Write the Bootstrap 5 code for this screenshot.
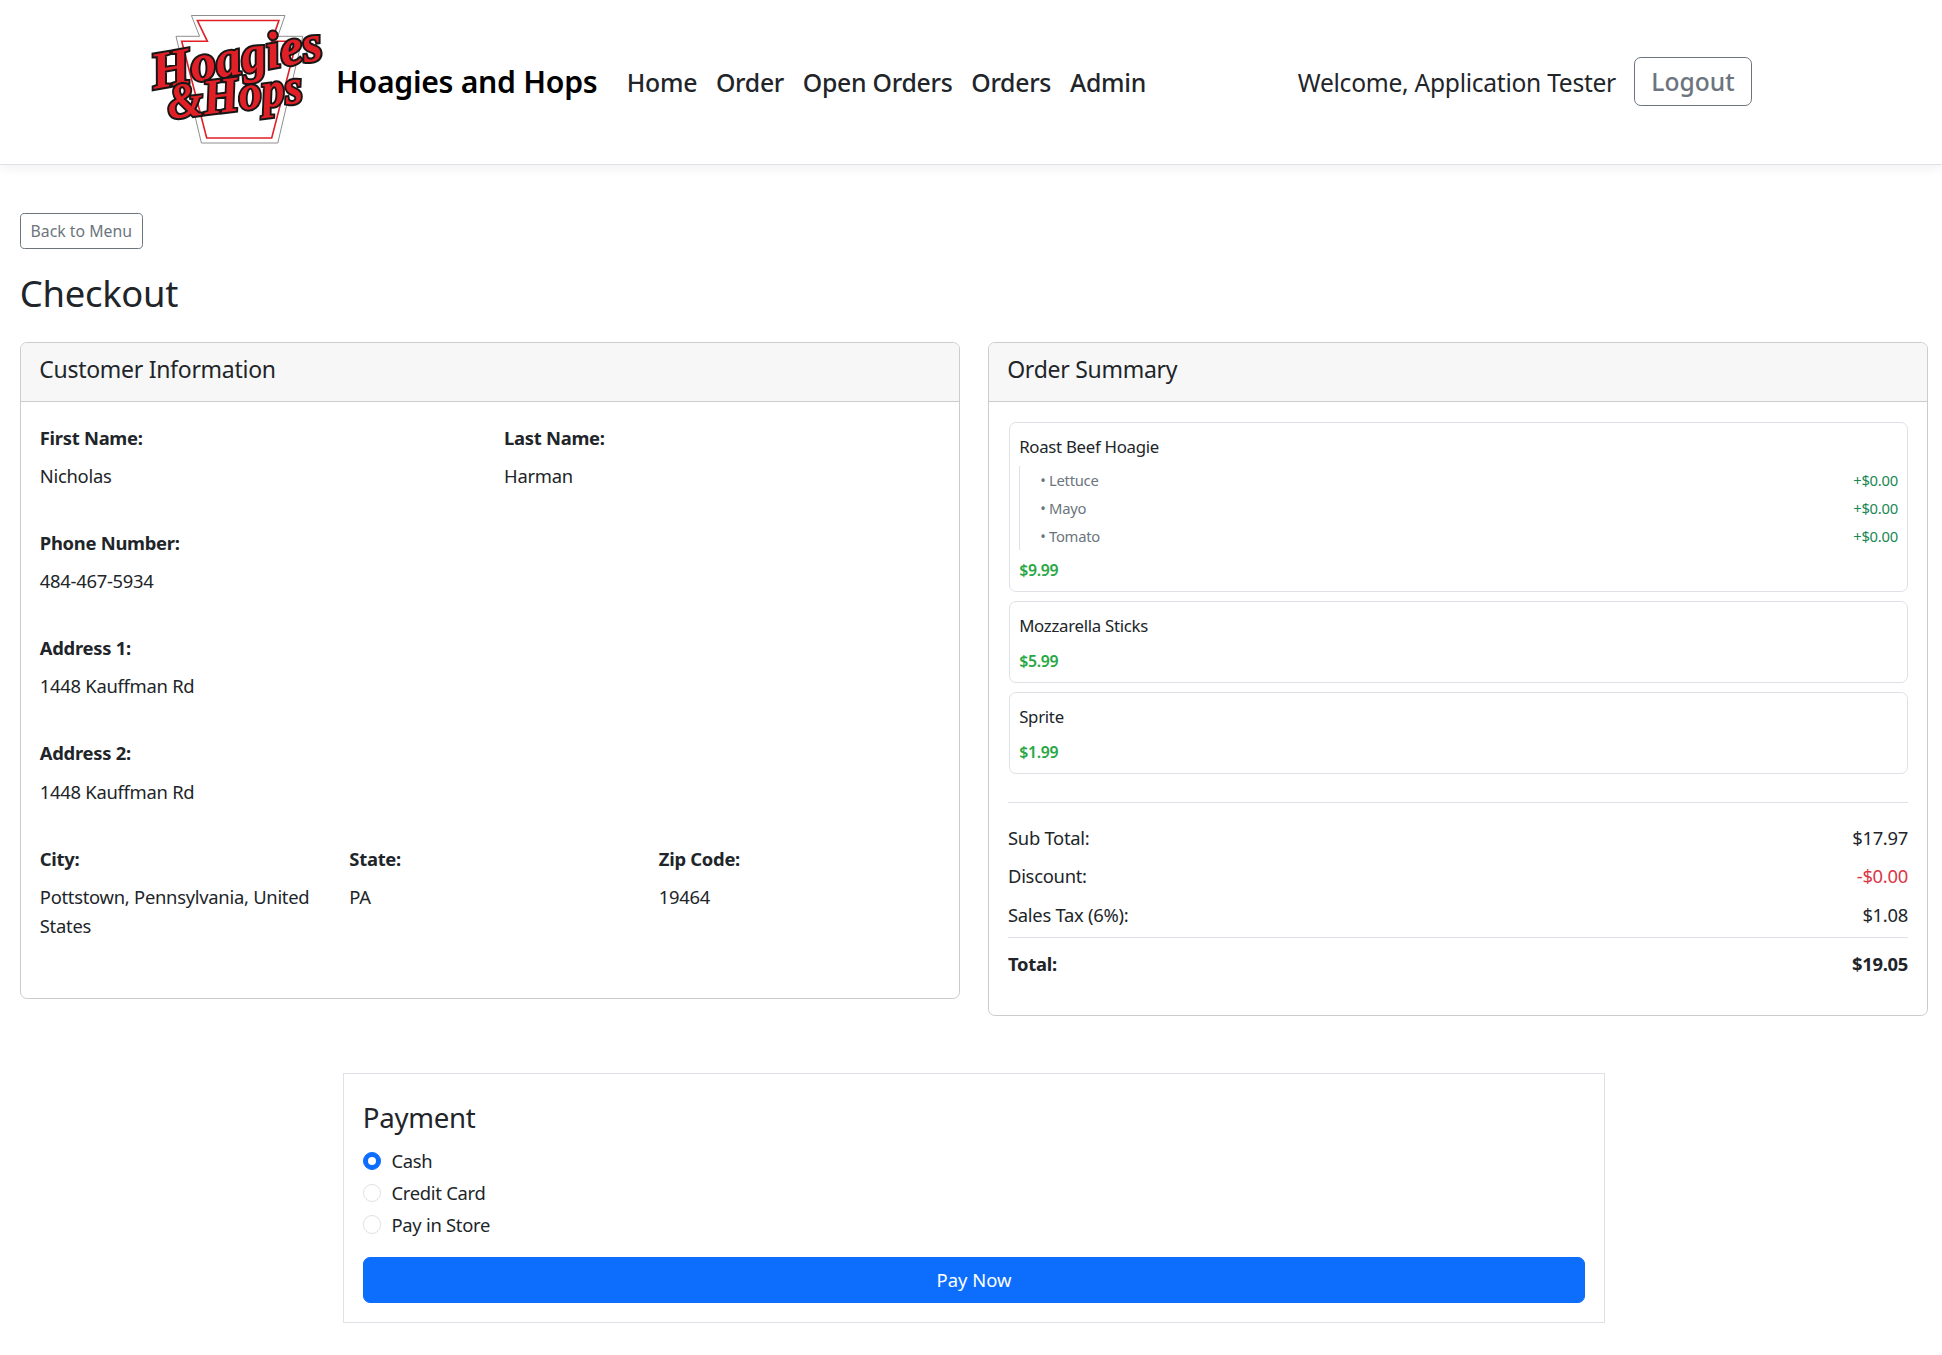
<!DOCTYPE html>
<html lang="en">
<head>
  <meta charset="UTF-8">
  <meta name="viewport" content="width=device-width, initial-scale=1.0">
  <title>Checkout - Hoagies and Hops</title>
  <link href="https://cdn.jsdelivr.net/npm/bootstrap@5.3.0/dist/css/bootstrap.min.css" rel="stylesheet">
  <style>
    html { font-size: 18.4px; }
    body { font-family: "Noto Sans", "Open Sans", sans-serif; letter-spacing: -0.015em; color: #212529; }
    .top-bar { height: 165px; padding-left: 151px; padding-right: 190px; border-bottom: 1px solid #dee2e6; box-shadow: 0 2px 12px rgba(0,0,0,.07); }
    .logo-svg { width: 172px; height: 129px; margin-right: 13px; margin-bottom: 5px; flex-shrink: 0; overflow: visible; }
    .logo-word { font-family: "Liberation Serif", serif; font-weight: 700; font-style: italic; fill: #e01f26; stroke: #161616; stroke-width: 4px; paint-order: stroke; letter-spacing: 0; }
    .brand-name { font-size: 30.2px; font-weight: 600; color: #000; margin-right: 20px; }
    .top-link { font-size: 24.8px; color: #212529; padding: 2px 9.4px 0; font-weight: 500; }
    .welcome-text { font-size: 24.6px; margin-right: 18px; padding-top: 2px; }
    .logout-btn { font-size: 24.6px; width: 118px; padding: 5.6px 0 3.6px; margin-bottom: 1px; font-weight: 500; }
    .page-wrap { padding: 48px 13.8px 0 19.8px; }
    .back-btn { height: 36px; width: 123px; padding: 0; line-height: 35px; font-size: 15.8px; }
    .page-title { font-size: 36.4px; margin: 22.5px 0 26.5px; line-height: 1.2; }
    .info-head { padding: 9.5px 18.4px 14.5px; background: #f7f7f7; border-bottom-color: #ccc; }
    .info-head h5 { font-size: 23px; font-weight: 400; margin: 0; line-height: 34px; }
    .info-card { border-color: #ccc; }
    .info-label { font-weight: 700; margin-bottom: 9.6px; }
    .info-value { margin-bottom: 39px; line-height: 29px; }
    .left-body { padding: 22px 18.4px 19px 19px; }
    .right-body { padding: 20.4px 19.2px 0; }
    .item-box { border: 1px solid #dee2e6; border-radius: 7px; padding: 10px 9.2px 6px; margin: 0 0 9px 1px; }
    .item-name { font-size: 16.8px; margin-bottom: 8px; line-height: 28px; }
    .opt-list { border-left: 1px solid #dee2e6; padding-left: 20px; margin-bottom: 7.5px; margin-top: -3.5px; }
    .opt-row { font-size: 14.8px; line-height: 28px; color: #6c757d; }
    .opt-price { color: #198754; }
    .item-price { font-size: 15.8px; font-weight: 600; color: #28a745; line-height: 26px; padding-bottom: 2px; }
    .sum-rule { margin: 28px 0 20.5px; color: #dee2e6; opacity: 1; }
    .sum-row { line-height: 27.6px; margin-bottom: 11px; }
    .sum-tail { height: 26.5px; }
    .total-rule { margin: -2px 0 11.5px; color: #dee2e6; opacity: 1; }
    .pay-box { border: 1px solid #dee2e6; padding: 27px 18.4px 19.6px; margin: 57px 1px 0; }
    .pay-box h4 { margin-bottom: 13px; font-size: 27.6px; }
    .pay-choice { margin-bottom: 4.3px; min-height: 27.6px; }
    .pay-choice label { margin-left: 1px; }
    .pay-choice .form-check-input:not(:checked) { border-color: #dee2e6; }
    .pay-btn { height: 46px; margin-top: 14px; border-radius: 7px; }
  </style>
</head>
<body>
  <nav class="top-bar d-flex align-items-center">
    <svg class="logo-svg" viewBox="0 0 172 129">
      <polygon points="40.4,0.5 134,0.5 126.8,21.3 151.8,21.3 126.8,128 50.4,128 25,21.3 48.6,21.3" fill="#fff" stroke="#8e8e8e" stroke-width="1"/>
      <polygon points="46.4,5.5 127.9,5.5 120.7,26.3 145.7,26.3 120.7,123 55.7,123 30.7,26.3 56.4,26.3" fill="#fff" stroke="#e01f26" stroke-width="1.6"/>
      <text class="logo-word" x="3" y="74" font-size="52" textLength="173" lengthAdjust="spacingAndGlyphs" transform="rotate(-10 3 74)">Hoagies</text>
      <text class="logo-word" x="18" y="104" font-size="50" textLength="136" lengthAdjust="spacingAndGlyphs" transform="rotate(-7 18 104)">&amp;Hops</text>
    </svg>
    <span class="brand-name">Hoagies and Hops</span>
    <a class="top-link text-decoration-none" href="#">Home</a>
    <a class="top-link text-decoration-none" href="#">Order</a>
    <a class="top-link text-decoration-none" href="#">Open Orders</a>
    <a class="top-link text-decoration-none" href="#">Orders</a>
    <a class="top-link text-decoration-none" href="#">Admin</a>
    <span class="welcome-text ms-auto">Welcome, Application Tester</span>
    <button class="btn btn-outline-secondary logout-btn" type="button">Logout</button>
  </nav>

  <div class="page-wrap">
    <button class="btn btn-sm btn-outline-secondary back-btn" type="button">Back to Menu</button>
    <h1 class="page-title fw-normal">Checkout</h1>

    <div class="row">
      <div class="col-6">
        <div class="card info-card">
          <div class="card-header info-head"><h5>Customer Information</h5></div>
          <div class="card-body left-body">
            <div class="row">
              <div class="col-6"><div class="info-label">First Name:</div><div class="info-value">Nicholas</div></div>
              <div class="col-6"><div class="info-label">Last Name:</div><div class="info-value">Harman</div></div>
            </div>
            <div class="info-label">Phone Number:</div><div class="info-value">484-467-5934</div>
            <div class="info-label">Address 1:</div><div class="info-value">1448 Kauffman Rd</div>
            <div class="info-label">Address 2:</div><div class="info-value">1448 Kauffman Rd</div>
            <div class="row">
              <div class="col-4"><div class="info-label">City:</div><div class="info-value">Pottstown, Pennsylvania, United States</div></div>
              <div class="col-4"><div class="info-label">State:</div><div class="info-value">PA</div></div>
              <div class="col-4"><div class="info-label">Zip Code:</div><div class="info-value">19464</div></div>
            </div>
          </div>
        </div>
      </div>

      <div class="col-6">
        <div class="card info-card">
          <div class="card-header info-head"><h5>Order Summary</h5></div>
          <div class="card-body right-body">
            <div class="item-box">
              <div class="item-name">Roast Beef Hoagie</div>
              <div class="opt-list">
                <div class="opt-row d-flex justify-content-between"><span>• Lettuce</span><span class="opt-price">+$0.00</span></div>
                <div class="opt-row d-flex justify-content-between"><span>• Mayo</span><span class="opt-price">+$0.00</span></div>
                <div class="opt-row d-flex justify-content-between"><span>• Tomato</span><span class="opt-price">+$0.00</span></div>
              </div>
              <div class="item-price">$9.99</div>
            </div>
            <div class="item-box">
              <div class="item-name">Mozzarella Sticks</div>
              <div class="item-price">$5.99</div>
            </div>
            <div class="item-box">
              <div class="item-name">Sprite</div>
              <div class="item-price">$1.99</div>
            </div>
            <hr class="sum-rule">
            <div class="sum-row d-flex justify-content-between"><span>Sub Total:</span><span>$17.97</span></div>
            <div class="sum-row d-flex justify-content-between"><span>Discount:</span><span class="text-danger">-$0.00</span></div>
            <div class="sum-row d-flex justify-content-between"><span>Sales Tax (6%):</span><span>$1.08</span></div>
            <hr class="total-rule">
            <div class="sum-row d-flex justify-content-between fw-bold"><span>Total:</span><span>$19.05</span></div>
            <div class="sum-tail"></div>
          </div>
        </div>
      </div>

      <div class="col-8 offset-2">
        <div class="pay-box">
          <h4 class="fw-normal">Payment</h4>
          <div class="form-check pay-choice">
            <input class="form-check-input" type="radio" name="payMethod" id="payCash" checked>
            <label class="form-check-label" for="payCash">Cash</label>
          </div>
          <div class="form-check pay-choice">
            <input class="form-check-input" type="radio" name="payMethod" id="payCard">
            <label class="form-check-label" for="payCard">Credit Card</label>
          </div>
          <div class="form-check pay-choice">
            <input class="form-check-input" type="radio" name="payMethod" id="payStore">
            <label class="form-check-label" for="payStore">Pay in Store</label>
          </div>
          <button class="btn btn-primary w-100 pay-btn" type="button">Pay Now</button>
        </div>
      </div>
    </div>
  </div>

  <script src="https://cdn.jsdelivr.net/npm/bootstrap@5.3.0/dist/js/bootstrap.bundle.min.js"></script>
</body>
</html>
